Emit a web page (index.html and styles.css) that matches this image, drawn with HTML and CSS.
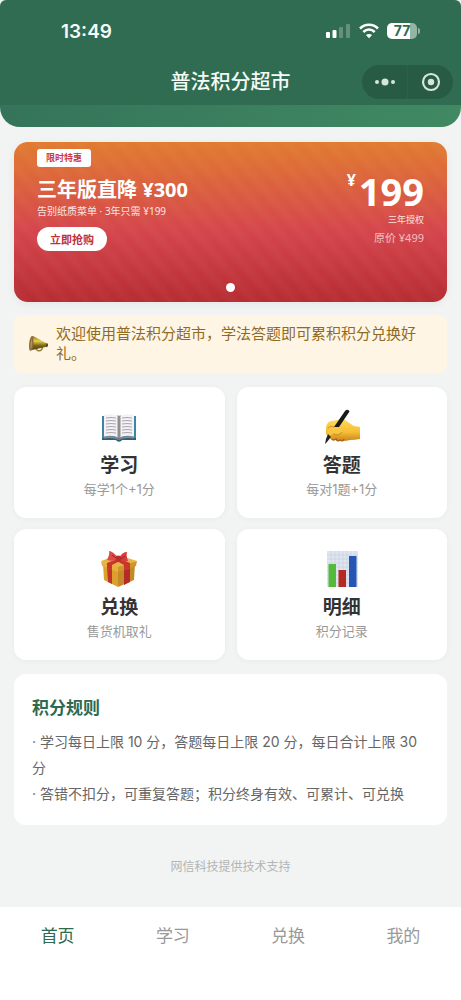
FILE: index.html
```html
<!DOCTYPE html>
<html lang="zh-CN">

<head>
    <meta charset="UTF-8">
    <meta name="viewport" content="width=device-width, initial-scale=1.0">
    <title>普法积分超市</title>
    <link rel="stylesheet" href="styles.css">
</head>

<body>
    <!-- 顶部 -->
    <header class="top">
        <div class="status">
            <span class="time">13:49</span>
            <div class="status-icons">
                <svg width="25" height="16" viewBox="0 0 25 16" fill="#fff">
                    <rect x="0" y="9" width="4" height="6" rx="1"/>
                    <rect x="6.500" y="7" width="4" height="8" rx="1"/>
                    <rect x="13" y="4" width="4" height="11" rx="1" opacity=".25"/>
                    <rect x="20" y="1" width="4" height="14" rx="1" opacity=".25"/>
                </svg>
                <svg width="20" height="16" viewBox="0 0 20 16" fill="none" stroke="#fff" stroke-width="2.500">
                    <path d="M1 5.500C6 .4 14 .4 19 5.500"/>
                    <path d="M4.300 9C7.600 5.800 12.400 5.800 15.700 9"/>
                    <path d="M10 15.300L6.900 12.100C8.700 10.500 11.300 10.500 13.100 12.100Z" fill="#fff" stroke="none"/>
                </svg>
                <div class="battery"><span>77</span></div>
            </div>
        </div>
        <div class="nav">
            <span></span>
            <h1>普法积分超市</h1>
            <div class="capsule">
                <button type="button" aria-label="更多">
                    <svg width="20" height="8" viewBox="0 0 20 8" fill="#d5e6dc">
                        <circle cx="2" cy="4" r="2"/>
                        <circle cx="10" cy="4" r="3.500"/>
                        <circle cx="18" cy="4" r="2"/>
                    </svg>
                </button>
                <button type="button" aria-label="关闭">
                    <svg width="20" height="20" viewBox="0 0 20 20">
                        <circle cx="10" cy="10" r="8" fill="none" stroke="#d5e6dc" stroke-width="2.200"/>
                        <circle cx="10" cy="10" r="3.200" fill="#d5e6dc"/>
                    </svg>
                </button>
            </div>
        </div>
    </header>
    <div class="hero"></div>

    <main class="content">
        <!-- 轮播图 -->
        <section class="banner">
            <div class="banner-left">
                <span class="tag">限时特惠</span>
                <h2>三年版直降 ¥300</h2>
                <p>告别纸质菜单 · 3年只需 ¥199</p>
                <button type="button">立即抢购</button>
            </div>
            <div class="banner-right">
                <div class="price"><small>¥</small>199</div>
                <p class="license">三年授权</p>
                <p class="old-price">原价 ¥499</p>
            </div>
            <span class="dot"></span>
        </section>

        <!-- 公告 -->
        <section class="notice">
            <svg width="20" height="20" viewBox="0 0 20 20">
                <defs>
                    <linearGradient id="gold" x1="0" y1="0" x2="0" y2="1">
                        <stop offset="0" stop-color="#8d7718"/>
                        <stop offset=".35" stop-color="#e6d14a"/>
                        <stop offset=".65" stop-color="#7c681a"/>
                        <stop offset="1" stop-color="#4b3a12"/>
                    </linearGradient>
                </defs>
                <path d="M8 13.500C8 18 14 18 14.500 13" fill="none" stroke="#8f7c35" stroke-width="1.500"/>
                <path d="M5 2L19 9.500Q20 11.500 18.500 12.800L2 16.500Z" fill="url(#gold)"/>
                <path d="M5 2Q6.500 9 4.500 16L1.500 16.500Q0 9 3 2.500Z" fill="#8b6a35"/>
                <path d="M4 4Q4.800 9 3.300 14.500L2.500 14.500Q1.800 9 4 4Z" fill="#b8965a"/>
                <path d="M18.500 9.500Q20 11 18.300 12.800" fill="none" stroke="#4b3a12" stroke-width="1.500"/>
            </svg>
            <p>欢迎使用普法积分超市，学法答题即可累积积分兑换好礼。</p>
        </section>

        <!-- 功能入口 -->
        <section class="grid">
            <button type="button" class="card">
                <svg width="36" height="36" viewBox="0 0 36 36">
                    <path d="M1 7H35V31H21Q18 34 15 31H1Z" fill="#3f83a5"/>
                    <path d="M1 29H35V31H21Q18 34 15 31H1Z" fill="#2a607d"/>
                    <path d="M3 27.500Q12 26 18 30Q24 26 33 27.500V29.500Q24 28 18 31Q12 28 3 29.500Z" fill="#8c8a85"/>
                    <path d="M3 6Q12 4 18 7V29Q12 25.500 3 27.500Z" fill="#f4f2f5"/>
                    <path d="M33 6Q24 4 18 7V29Q24 25.500 33 27.500Z" fill="#f4f2f5"/>
                    <path d="M16.500 6L18 7L19.500 6V28L18 30L16.500 28Z" fill="#8f908c"/>
                    <path d="M5 9Q10 8 15 9M5 12Q10 11 15 12M5 15Q10 14 15 15M5 18Q10 17 15 18M5 21Q10 20 15 21M5 24Q10 23 15 24M21 9Q26 8 31 9M21 12Q26 11 31 12M21 15Q26 14 31 15M21 18Q26 17 31 18M21 21Q26 20 31 21M21 24Q26 23 31 24" fill="none" stroke="#aaa5b4" stroke-width="1"/>
                </svg>
                <strong>学习</strong>
                <span>每学1个+1分</span>
            </button>
            <button type="button" class="card">
                <svg width="36" height="36" viewBox="0 0 36 36">
                    <defs>
                        <linearGradient id="skin" x1="0" y1="0" x2="0" y2="1">
                            <stop offset="0" stop-color="#ffd95a"/>
                            <stop offset=".6" stop-color="#f6bd35"/>
                            <stop offset="1" stop-color="#c8841d"/>
                        </linearGradient>
                    </defs>
                    <path d="M2 18Q3 13 7 12L14 11Q18 9 21 11Q27 15 30 17L36 18V30Q30 31 26 31Q19 33 12 31Q7 32 6 29L2 25Z" fill="url(#skin)"/>
                    <path d="M8 30Q9 32 12 30Q14 33 16 31Q19 33 20 30" fill="none" stroke="#a9651a" stroke-width="1.500"/>
                    <path d="M21 2Q24 -.5 25.500 2.500L15 18L10 18Z" fill="#191919"/>
                    <path d="M3 23Q5 17 10 18Q17 18 18 23Q15 26 10 24Q6 26 4 28Z" fill="#f8c640"/>
                    <path d="M9 25Q14 28 18 23M4 19Q6 16 10 18" fill="none" stroke="#cf8e23" stroke-width="1"/>
                    <path d="M4 25L7 28L3 33L1 35L2 30Z" fill="#242424"/>
                </svg>
                <strong>答题</strong>
                <span>每对1题+1分</span>
            </button>
            <button type="button" class="card">
                <svg width="36" height="36" viewBox="0 0 36 36">
                    <path d="M2 13L17 19V36L3 29Z" fill="#dca02e"/>
                    <path d="M17 19L34 13L33 29L17 36Z" fill="#c58a28"/>
                    <path d="M6 15L11 17V33L7 31Z" fill="#c2332c"/>
                    <path d="M23 17L29 15V31L23 34Z" fill="#b52c26"/>
                    <path d="M0 10L17 4L36 10L17 17Z" fill="#e6b548"/>
                    <path d="M0 10L17 16V21L1 15Z" fill="#e9b03b"/>
                    <path d="M17 16L36 10L35 15L17 21Z" fill="#d0952d"/>
                    <path d="M6 12L21 6L25 7L11 14V19L6 17Z" fill="#c9362e"/>
                    <path d="M29 12L14 6L10 7L23 14V19L29 17Z" fill="#c9362e"/>
                    <path d="M17 7Q12 0 8 0Q9 3 6 9Q12 11 17 8Z" fill="#dc4b45"/>
                    <path d="M18 7Q22 0 26 1Q25 4 27 10Q21 11 18 8Z" fill="#d63e3b"/>
                    <path d="M11 4L15 7M24 5L20 8" fill="none" stroke="#9c2224" stroke-width="1"/>
                    <rect x="15" y="5" width="5" height="5" rx="1" fill="#b92d2e"/>
                </svg>
                <strong>兑换</strong>
                <span>售货机取礼</span>
            </button>
            <button type="button" class="card">
                <svg width="36" height="36" viewBox="0 0 36 36">
                    <rect x="3" y="0" width="31" height="36" fill="#dfe6ef"/>
                    <path d="M7 0V36M11 0V36M15 0V36M19 0V36M23 0V36M27 0V36M31 0V36M3 4H34M3 8H34M3 12H34M3 16H34M3 20H34M3 24H34M3 28H34M3 32H34" stroke="#c5cedb" stroke-width=".6"/>
                    <rect x="4.500" y="13" width="7.500" height="23" fill="#55b93c"/>
                    <rect x="14.500" y="19" width="7.500" height="17" fill="#b52a20"/>
                    <rect x="25" y="5" width="7.500" height="31" fill="#2556b5"/>
                </svg>
                <strong>明细</strong>
                <span>积分记录</span>
            </button>
        </section>

        <!-- 积分规则 -->
        <section class="rules">
            <h2>积分规则</h2>
            <p>· 学习每日上限 10 分，答题每日上限 20 分，每日合计上限 30 分</p>
            <p>· 答错不扣分，可重复答题；积分终身有效、可累计、可兑换</p>
        </section>

        <p class="support">网信科技提供技术支持</p>
    </main>

    <!-- 底部导航 -->
    <nav class="tabs">
        <a href="#home" class="active">首页</a>
        <a href="#study">学习</a>
        <a href="#exchange">兑换</a>
        <a href="#mine">我的</a>
    </nav>
</body>

</html>
```

FILE: styles.css
```css
* {
    box-sizing: border-box;
}

body {
    margin: 0;
    min-height: 100vh;
    display: flex;
    flex-direction: column;
    background-color: #f2f4f4;
    font-family: Inter, "Noto Sans CJK SC", sans-serif;
    color: #333;
}

h1,
h2,
p {
    margin: 0;
}

button {
    border: none;
    padding: 0;
    font-family: inherit;
    cursor: pointer;
}

svg {
    display: block;
    flex-shrink: 0;
}

/* 顶部状态栏和标题 */
.top {
    background-color: #306c51;
    color: #f4faf6;
    padding-top: 16px;
    border-radius: 6px 6px 0 0;
}

.status {
    display: flex;
    justify-content: space-between;
    align-items: center;
    height: 30px;
    padding: 0 41px 0 61px;
}

.time {
    font-size: 19px;
    font-weight: 600;
}

.status-icons {
    display: flex;
    align-items: center;
    gap: 8px;
}

.battery {
    position: relative;
    width: 30px;
    height: 16px;
    margin-right: 3px;
    border-radius: 5px;
    background: linear-gradient(to right, #fff 77%, #94b5a4 77%);
    color: #306c51;
    font-size: 14px;
    font-weight: 700;
    line-height: 16px;
    text-align: center;
}

.battery::after {
    content: "";
    position: absolute;
    right: -3px;
    top: 5px;
    width: 2px;
    height: 6px;
    border-radius: 0 2px 2px 0;
    background-color: #94b5a4;
}

.nav {
    display: grid;
    grid-template-columns: 1fr auto 1fr;
    align-items: center;
    height: 46px;
    margin-top: 13px;
    padding: 0 8px;
}

.nav h1 {
    font-size: 20px;
    font-weight: 500;
    line-height: 28px;
}

.capsule {
    justify-self: end;
    display: flex;
    width: 91px;
    height: 34px;
    border-radius: 17px;
    background-color: #285b44;
}

.capsule button {
    flex: 1;
    display: flex;
    align-items: center;
    justify-content: center;
    background: none;
}

.capsule button + button {
    border-left: 1px solid #2c604a;
}

.hero {
    height: 22px;
    border-radius: 0 0 20px 20px;
    background: linear-gradient(to right, #35745a, #408963);
}

.content {
    flex: 1;
    padding: 15px 14px 0;
}

/* 轮播图 */
.banner {
    position: relative;
    display: flex;
    justify-content: space-between;
    min-height: 160px;
    padding: 7px 23px;
    border-radius: 14px;
    background:
        repeating-linear-gradient(50deg, transparent 0, rgba(255, 255, 255, 0.03) 8px, transparent 16px),
        linear-gradient(#e17b2f, #d5454c 55%, #b62c31);
    box-shadow: 0 2px 8px rgba(0, 0, 0, 0.06);
    color: #fff;
    font-family: "Noto Sans", "Noto Sans CJK SC", sans-serif;
}

.banner-left {
    display: flex;
    flex-direction: column;
    align-items: flex-start;
}

.tag {
    padding: 0 9px;
    border-radius: 3px;
    background-color: #fff;
    color: #c8394a;
    font-size: 9px;
    font-weight: 700;
    line-height: 18px;
}

.banner h2 {
    margin-top: 9px;
    font-size: 20px;
    line-height: 28px;
}

.banner-left p {
    font-size: 10px;
    line-height: 14px;
    opacity: 0.85;
}

.banner-left button {
    margin-top: 9px;
    width: 70px;
    height: 24px;
    border-radius: 12px;
    background-color: #fff;
    color: #c0303c;
    font-size: 11px;
    font-weight: 700;
}

.banner-right {
    padding-top: 22px;
    text-align: right;
}

.price {
    display: flex;
    align-items: flex-start;
    justify-content: flex-end;
    gap: 3px;
    font-size: 38px;
    font-weight: 700;
    line-height: 40px;
}

.price small {
    font-size: 16px;
    line-height: 18px;
}

.license {
    margin-top: 2px;
    font-size: 9px;
    line-height: 14px;
    opacity: 0.85;
}

.old-price {
    margin-top: 3px;
    font-size: 11px;
    line-height: 16px;
    opacity: 0.65;
}

.dot {
    position: absolute;
    left: 50%;
    bottom: 10px;
    width: 9px;
    height: 9px;
    margin-left: -5px;
    border-radius: 50%;
    background-color: #fff;
}

/* 公告 */
.notice {
    display: flex;
    align-items: center;
    gap: 8px;
    margin-top: 13px;
    padding: 9px 14px;
    border-radius: 8px;
    background-color: #fff5e5;
    color: #8f6b1f;
    font-size: 15px;
    line-height: 20px;
}

/* 功能入口 */
.grid {
    display: grid;
    grid-template-columns: 1fr 1fr;
    gap: 11px 12px;
    margin-top: 14px;
}

.card {
    display: flex;
    flex-direction: column;
    align-items: center;
    padding: 22px 0 20px;
    border-radius: 12px;
    background-color: #fff;
    box-shadow: 0 1px 6px rgba(0, 0, 0, 0.04);
}

.card strong {
    margin-top: 9px;
    color: #333;
    font-size: 19px;
    line-height: 24px;
}

.card span {
    margin-top: 2px;
    color: #999;
    font-size: 13px;
    line-height: 18px;
}

/* 积分规则 */
.rules {
    margin-top: 14px;
    padding: 20px 18px 18px;
    border-radius: 12px;
    background-color: #fff;
    color: #666;
    font-size: 14px;
    line-height: 26px;
}

.rules h2 {
    margin-bottom: 7px;
    color: #2d6a4f;
    font-size: 17px;
    line-height: 28px;
}

.support {
    margin-top: 33px;
    color: #b2b5b4;
    font-size: 12px;
    line-height: 18px;
    text-align: center;
}

/* 底部导航 */
.tabs {
    display: flex;
    padding: 17px 0 52px;
    background-color: #fff;
}

.tabs a {
    flex: 1;
    color: #999;
    font-size: 17px;
    line-height: 24px;
    text-align: center;
    text-decoration: none;
}

.tabs .active {
    color: #2d6a4f;
}
```
